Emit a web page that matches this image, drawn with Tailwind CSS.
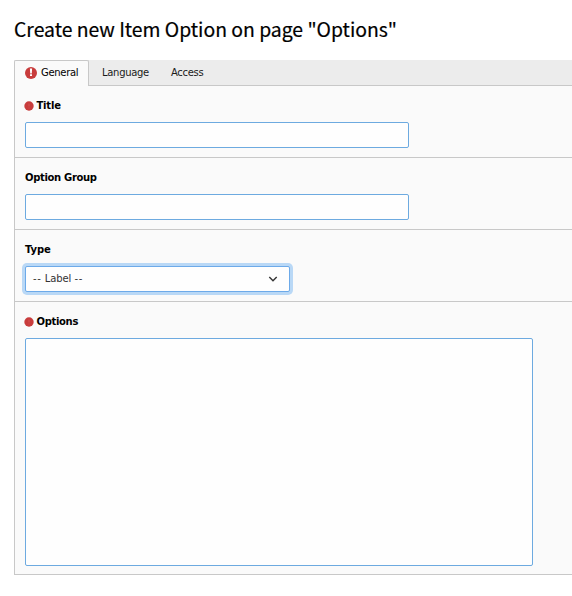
<!DOCTYPE html>
<html lang="en">
<head>
<meta charset="utf-8">
<title>Create new Item Option</title>
<script src="https://cdn.jsdelivr.net/npm/@tailwindcss/browser@4"></script>
</head>
<body class="h-[596px] overflow-hidden bg-white pl-[14px] font-['DejaVu_Sans',sans-serif] text-[10px] leading-[14px] text-black">
  <h1 class="h-[60px] pt-[14px] font-['Noto_Sans_CJK_SC',sans-serif] text-[19.4px] leading-[29px] tracking-[-0.02px] whitespace-nowrap [-webkit-text-stroke:0.2px_black]">Create new Item Option on page "Options"</h1>
  <nav class="flex h-[26px] bg-[#ececec] tracking-[-0.3px] text-[#1a1a1a]">
    <a class="flex w-[75px] items-center rounded-t-[2px] border border-b-0 border-[#c8c8c8] bg-[#fafafa] pl-[10px] text-black">
      <svg class="-mt-px mr-[4px] h-3 w-3 shrink-0" viewBox="0 0 12 12"><circle cx="6" cy="6" r="6" fill="#c83c3c"/><path d="M4.900 1.500h2.200l-.3 5H5.200zM5 7.300h2v1.800H5z" fill="#fff"/></svg>
      <span class="-mt-px">General</span>
    </a>
    <a class="flex w-[70px] items-center border-b border-[#c8c8c8] pl-[13px]">Language</a>
    <a class="flex flex-1 items-center border-b border-[#c8c8c8] pl-[12px] tracking-[-0.3px]">Access</a>
  </nav>
  <main class="h-[489px] border-b border-l border-[#c8c8c8] bg-[#fafafa]">
    <section class="h-[72px] border-b border-[#c8c8c8] pt-[13px] pl-[10px]">
      <label class="flex h-[14px] items-center font-bold tracking-[-0.2px]"><svg class="-mt-px -ml-px mr-[2.500px] h-[10px] w-[10px]" viewBox="0 0 10 10"><circle cx="5" cy="5" r="4.700" fill="#c83c3c"/><path d="M5 2.500v3M5 6.500v1" stroke="#d45858" stroke-width=".8"/></svg>Title</label>
      <input class="mt-[9px] block h-[26px] w-[384px] rounded-[2px] border border-[#6daae0] bg-[#fefefe] outline-none">
    </section>
    <section class="h-[72px] border-b border-[#c8c8c8] pt-[13px] pl-[10px]">
      <label class="block h-[14px] font-bold tracking-[-0.33px]">Option Group</label>
      <input class="mt-[9px] block h-[26px] w-[384px] rounded-[2px] border border-[#6daae0] bg-[#fefefe] outline-none">
    </section>
    <section class="h-[72px] border-b border-[#c8c8c8] pt-[13px] pl-[10px]">
      <label class="block h-[14px] font-bold tracking-[-0.1px]">Type</label>
      <div class="mt-[9px] flex h-[26px] w-[265px] items-center justify-between rounded-[2px] border border-[#6daae9] bg-[#fefefe] pr-[11px] pl-[7px] text-[#333] ring-3 ring-[#b9d8f6]">
        <span><span class="tracking-[0.7px]">--</span> <span class="tracking-[-0.1px]">Label</span> <span class="tracking-[0.7px]">--</span></span>
        <svg class="h-[10px] w-[10px]" viewBox="0 0 10 10" fill="none" stroke="#333" stroke-width="1.400"><path d="M1.300 3 5 6.700 8.700 3"/></svg>
      </div>
    </section>
    <section class="pt-[13px] pl-[10px]">
      <label class="flex h-[14px] items-center font-bold tracking-[-0.33px]"><svg class="-mt-px -ml-px mr-[2.500px] h-[10px] w-[10px]" viewBox="0 0 10 10"><circle cx="5" cy="5" r="4.700" fill="#c83c3c"/><path d="M5 2.500v3M5 6.500v1" stroke="#d45858" stroke-width=".8"/></svg>Options</label>
      <textarea class="mt-[9px] block h-[228px] w-[508px] resize-none rounded-[2px] border border-[#6daae0] bg-[#fefefe] outline-none"></textarea>
    </section>
  </main>
</body>
</html>
